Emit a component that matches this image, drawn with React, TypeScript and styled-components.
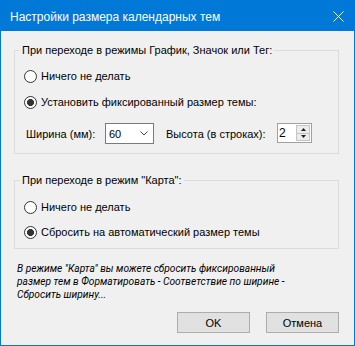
import React from "react";
import styled, { createGlobalStyle } from "styled-components";

const Global = createGlobalStyle`
  html, body { margin: 0; padding: 0; background: #ffffff; }
  body { font-family: "Liberation Sans", Arial, sans-serif; }
`;

const Window = styled.div`
  width: 355px;
  height: 346px;
  box-sizing: border-box;
  border: 1px solid #0078d7;
  background: #f0f0f0;
  display: flex;
  flex-direction: column;
  font-family: "Liberation Sans", Arial, sans-serif;
  font-size: 11px;
  color: #000;
`;

const TitleBar = styled.div`
  height: 30px;
  flex: none;
  background: #0078d7;
  color: #fff;
  display: flex;
  align-items: center;
  justify-content: space-between;
  padding: 0 10px 0 9px;
  font-size: 12px;
`;

const Title = styled.span`
  line-height: 16px;
  padding-top: 1px;
`;

const CloseIcon = styled.svg`
  display: block;
  width: 11px;
  height: 11px;
`;

const Content = styled.div`
  flex: 1;
  display: flex;
  flex-direction: column;
  padding: 11px 15px 0 13px;
`;

const Group = styled.fieldset<{ $mt?: number }>`
  margin: ${(p) => p.$mt ?? 0}px 0 0 0;
  padding: 0;
  border: 1px solid #dcdcdc;
  min-width: 0;
`;

const Legend = styled.legend`
  margin-left: 5px;
  padding: 0 2px;
  line-height: 17px;
  font-size: 11px;
`;

const GroupBody = styled.div<{ $pt: number; $pb: number }>`
  display: flex;
  flex-direction: column;
  padding: ${(p) => p.$pt}px 0 ${(p) => p.$pb}px 9px;
`;

const RadioRow = styled.div<{ $mt?: number }>`
  display: flex;
  align-items: center;
  height: 16px;
  gap: 4px;
  margin-top: ${(p) => p.$mt ?? 0}px;
`;

const RadioCircle = styled.span<{ $checked?: boolean }>`
  width: 13px;
  height: 13px;
  box-sizing: border-box;
  border: 1px solid #333333;
  border-radius: 50%;
  flex: none;
  background: ${(p) =>
    p.$checked
      ? "radial-gradient(circle at center, #333333 0 3.2px, #ffffff 3.8px)"
      : "#ffffff"};
`;

const FieldRow = styled.div<{ $mt: number }>`
  display: flex;
  align-items: center;
  margin-top: ${(p) => p.$mt}px;
  padding-left: 2px;
  height: 21px;
`;

const FieldLabel = styled.span<{ $w: number }>`
  width: ${(p) => p.$w}px;
  flex: none;
  white-space: nowrap;
`;

const Combo = styled.div`
  width: 49px;
  height: 21px;
  box-sizing: border-box;
  border: 1px solid #7a7a7a;
  background: #fff;
  display: flex;
  align-items: center;
  justify-content: space-between;
  padding: 0 5px 0 3px;
  margin-right: 12px;
  flex: none;
`;

const Chevron = styled.svg`
  display: block;
  width: 8px;
  height: 5px;
`;

const Spinner = styled.div`
  width: 35px;
  height: 20px;
  box-sizing: border-box;
  border: 1px solid #a0a0a0;
  background: #fff;
  display: flex;
  flex: none;
  margin-top: -1px;
`;

const SpinValue = styled.span`
  flex: 1;
  padding-left: 1px;
  font-size: 12px;
  line-height: 18px;
`;

const SpinButtons = styled.div`
  width: 14px;
  display: flex;
  flex-direction: column;
  margin: 1px 1px 1px 0;
`;

const SpinButton = styled.div`
  flex: 1;
  box-sizing: border-box;
  border: 1px solid #c4c4c4;
  background: #ececec;
  display: flex;
  align-items: center;
  justify-content: center;
  & + & { border-top: 0; }
`;

const Arrow = styled.svg`
  display: block;
  width: 5px;
  height: 3px;
`;

const Note = styled.p`
  margin: 13px 0 0 0;
  padding-left: 3px;
  font-family: Roboto, "Liberation Sans", Arial, sans-serif;
  font-style: italic;
  line-height: 13px;
  font-size: 10.2px;
`;

const ButtonRow = styled.div`
  display: flex;
  justify-content: flex-end;
  gap: 16px;
  margin-top: 11px;
`;

const Button = styled.button`
  width: 73px;
  height: 21px;
  box-sizing: border-box;
  border: 1px solid #adadad;
  background: #e1e1e1;
  font-family: "Liberation Sans", Arial, sans-serif;
  font-size: 11px;
  color: #000;
  padding: 0;
  margin: 0;
`;

function Radio({ checked, label, mt }: { checked?: boolean; label: string; mt?: number }) {
  return (
    <RadioRow $mt={mt}>
      <RadioCircle $checked={checked} />
      <span>{label}</span>
    </RadioRow>
  );
}

export default function App() {
  return (
    <>
      <Global />
      <Window>
        <TitleBar>
          <Title>Настройки размера календарных тем</Title>
          <CloseIcon viewBox="0 0 11 11">
            <path d="M0.5 0.5 L10.5 10.5 M10.5 0.5 L0.5 10.5" stroke="#fff" strokeWidth="1" fill="none" />
          </CloseIcon>
        </TitleBar>
        <Content>
          <Group>
            <Legend>При переходе в режимы График, Значок или Тег:</Legend>
            <GroupBody $pt={9} $pb={9}>
              <Radio label="Ничего не делать" />
              <Radio checked label="Установить фиксированный размер темы:" mt={10} />
              <FieldRow $mt={13}>
                <FieldLabel $w={79}>Ширина (мм):</FieldLabel>
                <Combo>
                  <span>60</span>
                  <Chevron viewBox="0 0 8 5">
                    <path d="M0.5 0.5 L4 4 L7.5 0.5" stroke="#444" strokeWidth="1" fill="none" />
                  </Chevron>
                </Combo>
                <FieldLabel $w={111}>Высота (в строках):</FieldLabel>
                <Spinner>
                  <SpinValue>2</SpinValue>
                  <SpinButtons>
                    <SpinButton>
                      <Arrow viewBox="0 0 5 3">
                        <path d="M2.5 0 L5 3 L0 3 Z" fill="#222" />
                      </Arrow>
                    </SpinButton>
                    <SpinButton>
                      <Arrow viewBox="0 0 5 3">
                        <path d="M0 0 L5 0 L2.5 3 Z" fill="#222" />
                      </Arrow>
                    </SpinButton>
                  </SpinButtons>
                </Spinner>
              </FieldRow>
            </GroupBody>
          </Group>
          <Group $mt={18}>
            <Legend>При переходе в режим "Карта":</Legend>
            <GroupBody $pt={10} $pb={8}>
              <Radio label="Ничего не делать" />
              <Radio checked label="Сбросить на автоматический размер темы" mt={9} />
            </GroupBody>
          </Group>
          <Note>
            В режиме "Карта" вы можете сбросить фиксированный
            <br />
            размер тем в Форматировать - Соответствие по ширине -
            <br />
            Сбросить ширину...
          </Note>
          <ButtonRow>
            <Button>OK</Button>
            <Button>Отмена</Button>
          </ButtonRow>
        </Content>
      </Window>
    </>
  );
}
